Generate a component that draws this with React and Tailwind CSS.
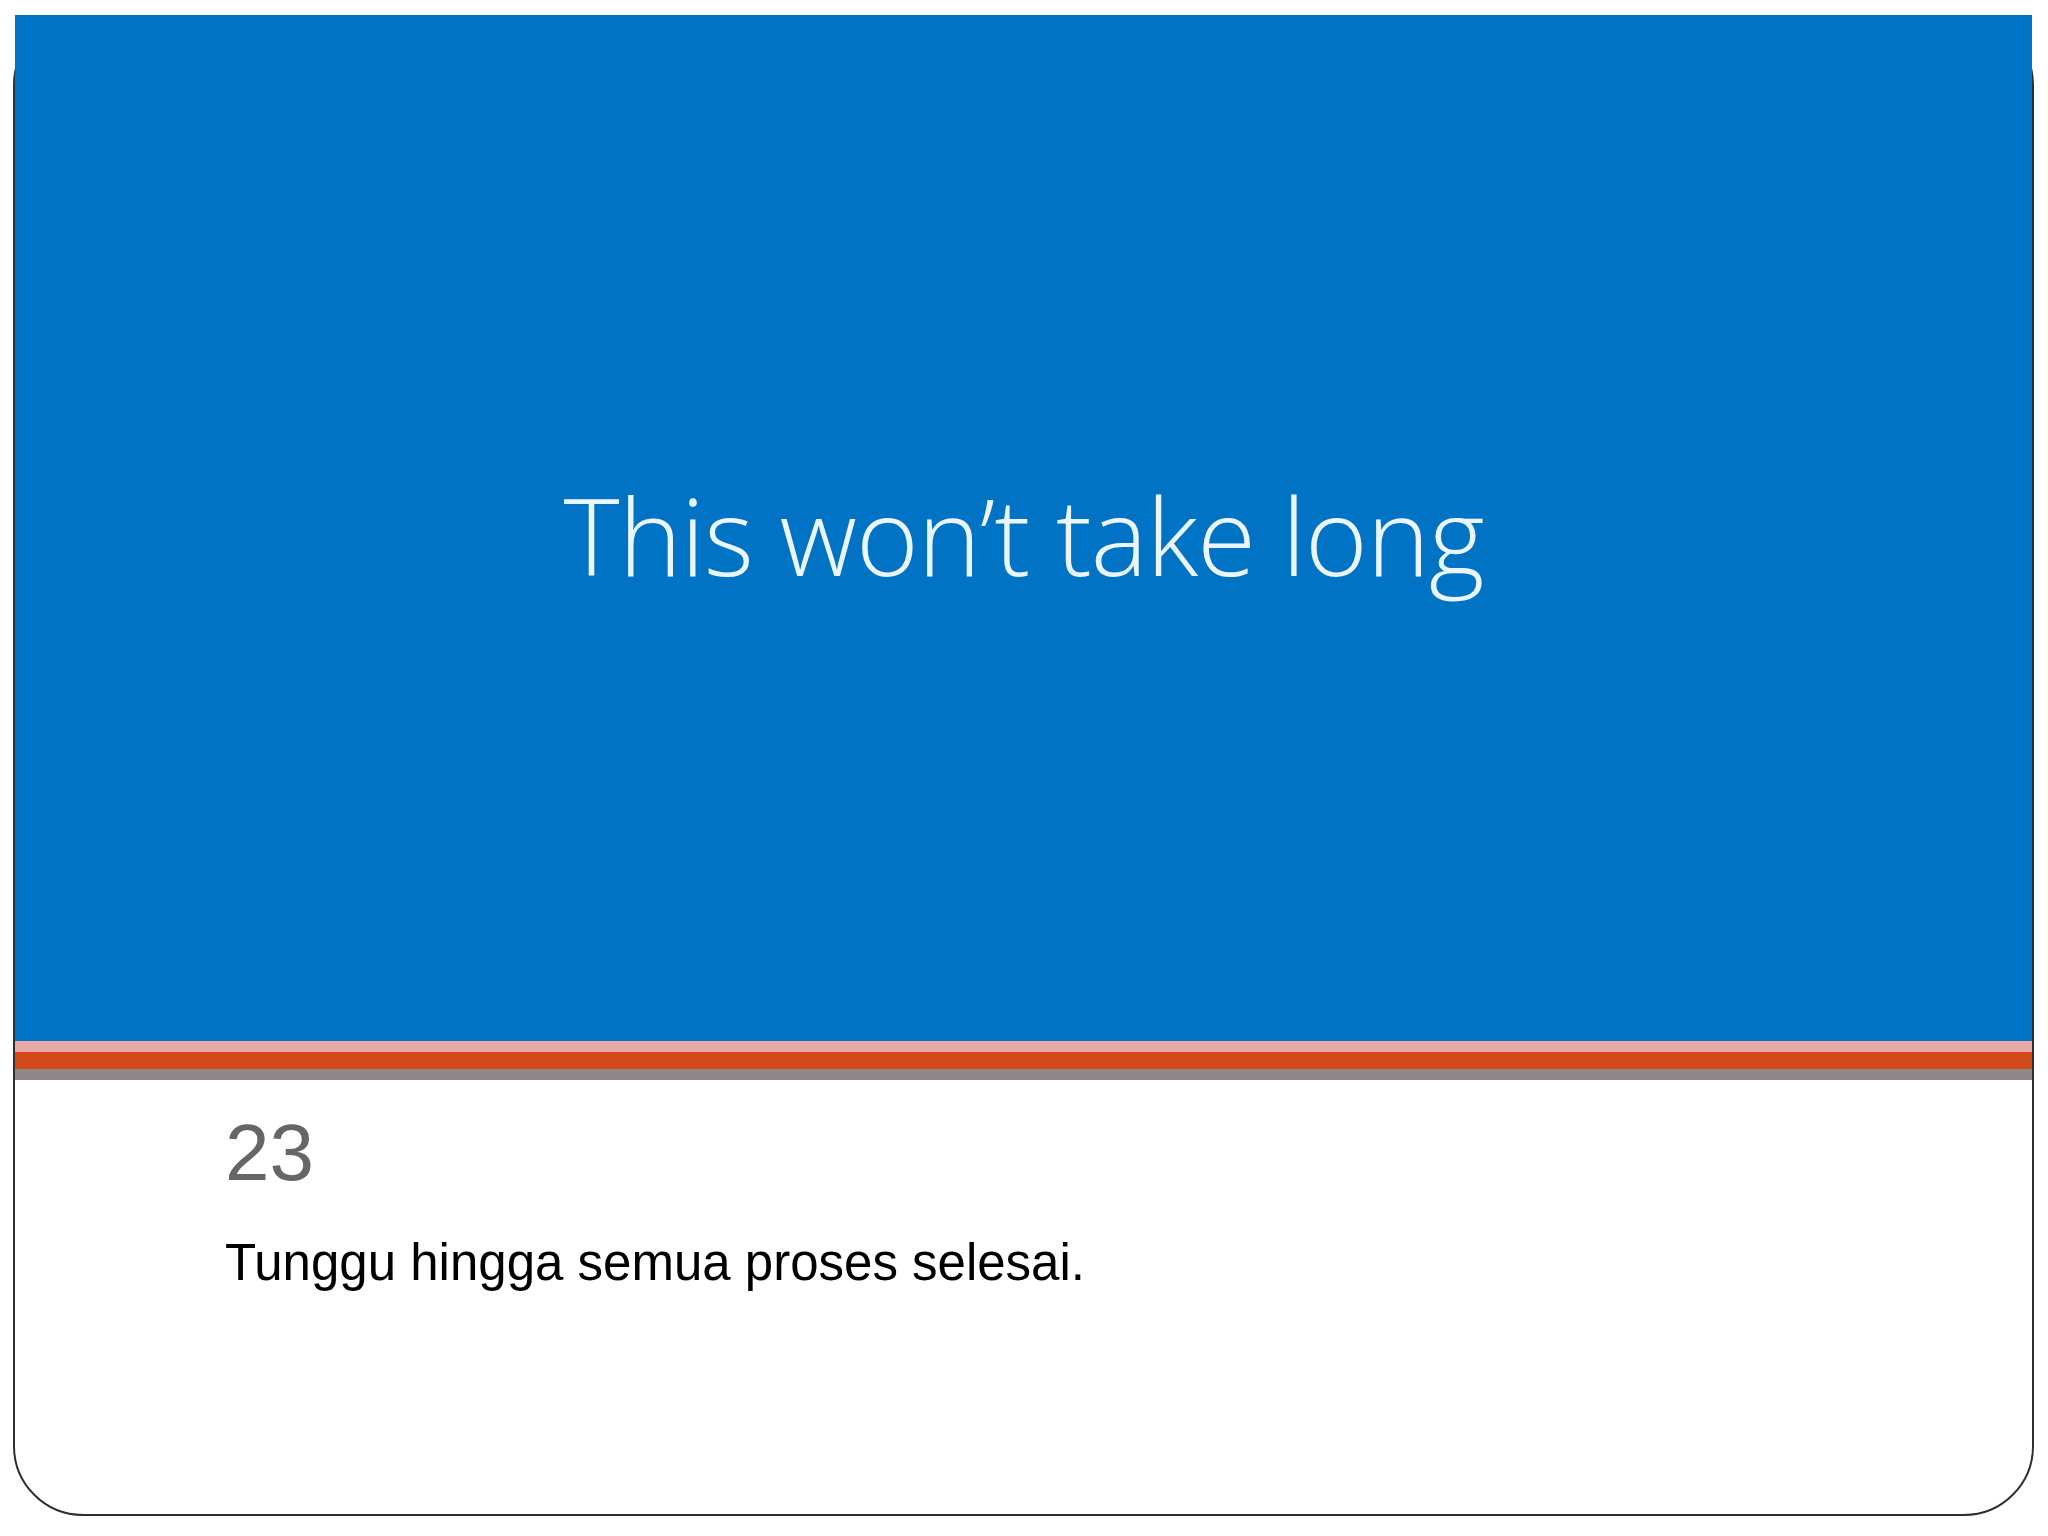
export default function App() {
  return (
    <div className="w-[2048px] h-[1536px] bg-white overflow-hidden pt-[15px] pl-[13px]">
      <div className="w-[2021px] h-[1501px] border-2 border-[#2e2e2e] rounded-[70px]">
        <div className="-mt-[2px] h-[1026px] bg-[#0173c4] flex items-center justify-center pt-[12px]">
          <div
            className="text-[#eaf6fc] text-[107px] leading-none font-light tracking-[-1px]"
            style={{ fontFamily: '"Open Sans", "Noto Sans", sans-serif' }}
          >
            This won’t take long
          </div>
        </div>
        <div className="h-[11px] bg-[#e9aaa6]" />
        <div className="h-[17px] bg-[#d34b1c]" />
        <div className="h-[11px] bg-[#8e8888]" />
        <div
          className="pl-[210px] pt-[33px]"
          style={{ fontFamily: '"Liberation Sans", Arial, sans-serif' }}
        >
          <div className="text-[80px] leading-[80px] text-[#666666]">23</div>
          <div className="mt-[44px] text-[51px] leading-[51px] text-black">
            Tunggu hingga semua proses selesai.
          </div>
        </div>
      </div>
    </div>
  );
}
